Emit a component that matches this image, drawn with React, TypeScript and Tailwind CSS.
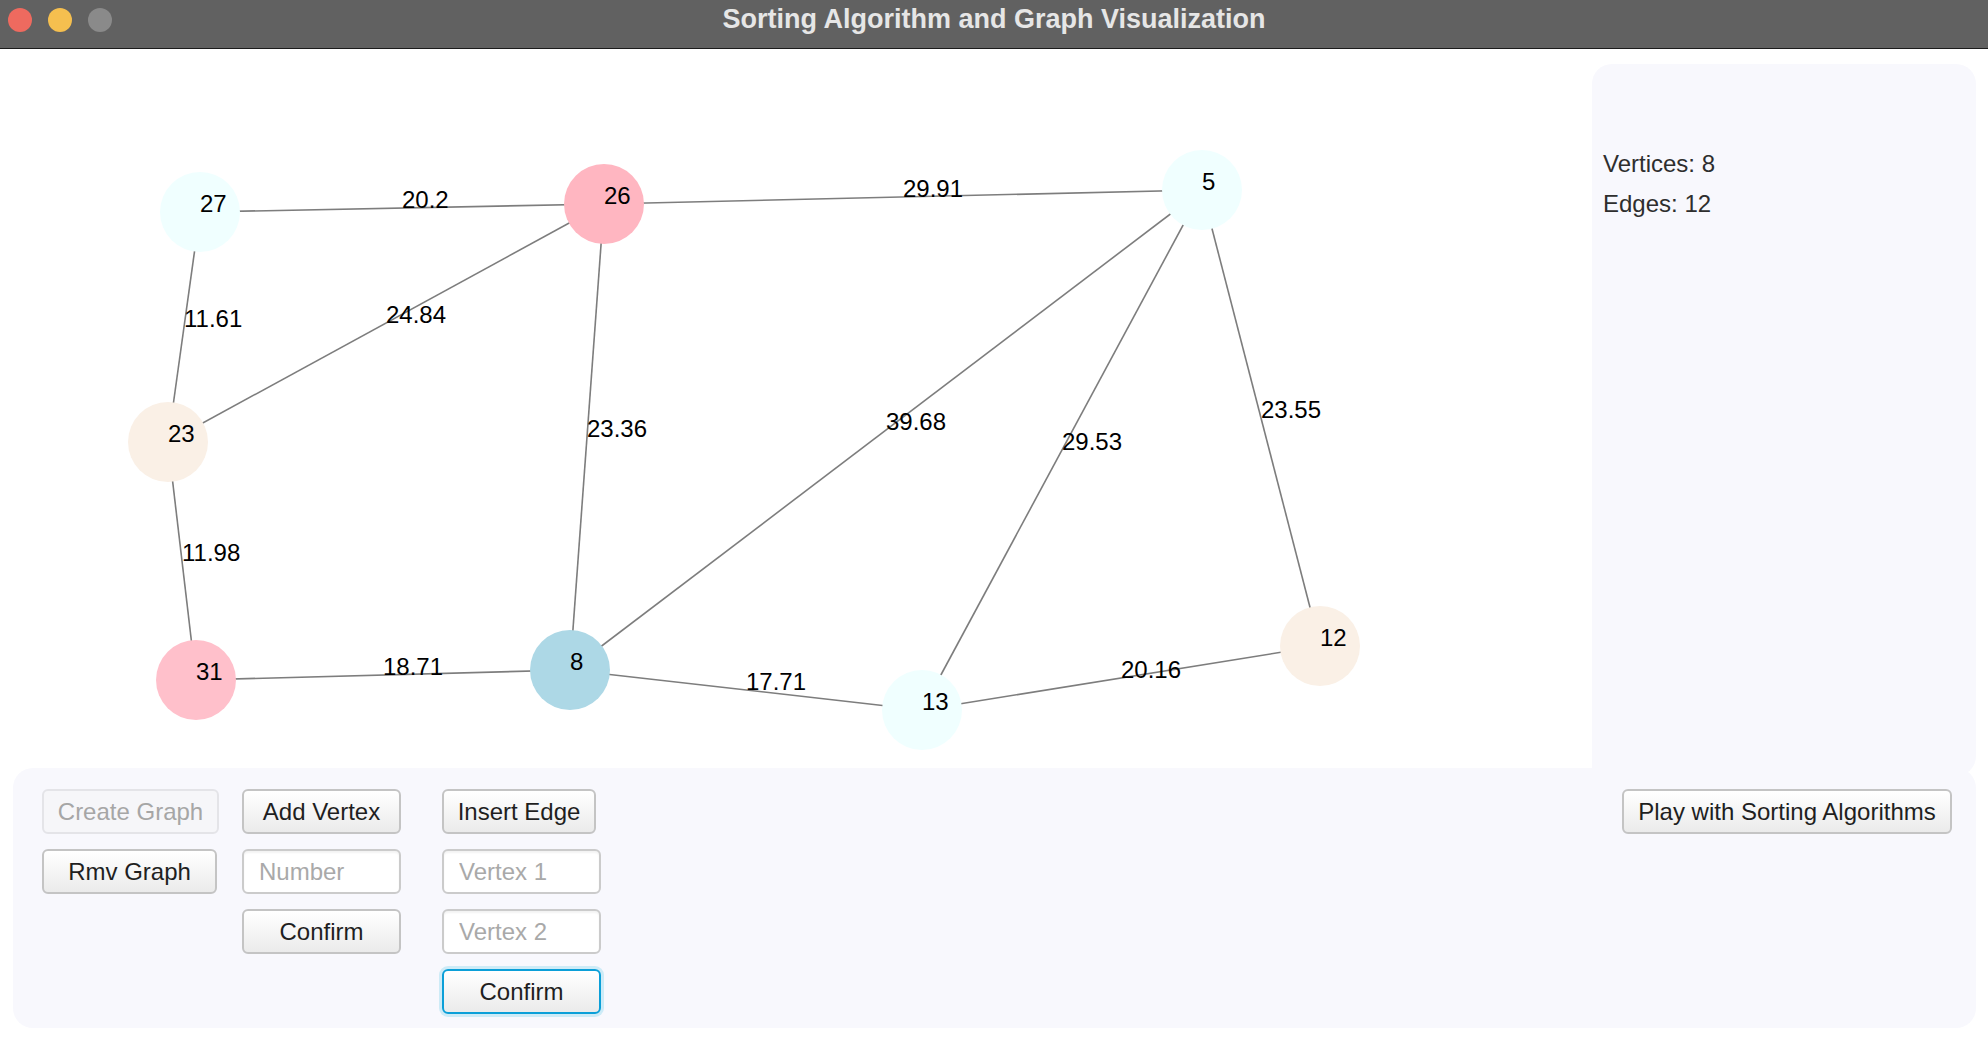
import type { ReactNode } from "react";

type Node = { id: string; x: number; y: number; fill: string };

const nodes: Node[] = [
  { id: "27", x: 200, y: 212, fill: "#f0ffff" },
  { id: "26", x: 604, y: 204, fill: "#ffb6c1" },
  { id: "5", x: 1202, y: 190, fill: "#f0ffff" },
  { id: "23", x: 168, y: 442, fill: "#faf0e6" },
  { id: "31", x: 196, y: 680, fill: "#ffc0cb" },
  { id: "8", x: 570, y: 670, fill: "#add8e6" },
  { id: "13", x: 922, y: 710, fill: "#f0ffff" },
  { id: "12", x: 1320, y: 646, fill: "#faf0e6" },
];

const edges: [string, string, string][] = [
  ["27", "26", "20.2"],
  ["26", "5", "29.91"],
  ["27", "23", "11.61"],
  ["23", "26", "24.84"],
  ["26", "8", "23.36"],
  ["5", "8", "39.68"],
  ["5", "13", "29.53"],
  ["5", "12", "23.55"],
  ["23", "31", "11.98"],
  ["31", "8", "18.71"],
  ["8", "13", "17.71"],
  ["13", "12", "20.16"],
];

const byId = Object.fromEntries(nodes.map(n => [n.id, n]));

function Graph() {
  return (
    <svg width={1592} height={719} viewBox="0 49 1592 719" className="shrink-0">
      {edges.map(([a, b]) => (
        <line
          key={a + b}
          x1={byId[a].x}
          y1={byId[a].y}
          x2={byId[b].x}
          y2={byId[b].y}
          stroke="#7d7d7d"
          strokeWidth={1.6}
        />
      ))}
      {nodes.map(n => (
        <circle key={n.id} cx={n.x} cy={n.y} r={40} fill={n.fill} />
      ))}
      <g fontFamily="'Liberation Sans', Arial, sans-serif" fontSize={24} fill="#000">
        {edges.map(([a, b, w]) => (
          <text key={w + a} x={(byId[a].x + byId[b].x) / 2} y={(byId[a].y + byId[b].y) / 2}>
            {w}
          </text>
        ))}
        {nodes.map(n => (
          <text key={n.id} x={n.x} y={n.y}>
            {n.id}
          </text>
        ))}
      </g>
    </svg>
  );
}

function Btn({ children, className = "", disabled, focused }: { children: ReactNode; className?: string; disabled?: boolean; focused?: boolean }) {
  const base = "h-[45px] rounded-[6px] text-[24px] leading-none flex items-center justify-center";
  if (disabled) {
    return (
      <button type="button" disabled className={`${base} border-2 border-[#e4e4e8] bg-[#f6f6f9] text-[#a6a6a6] ${className}`}>
        {children}
      </button>
    );
  }
  return (
    <button
      type="button"
      className={`${base} bg-linear-to-b from-white to-[#ebebeb] text-[#1f1f1f] ${
        focused ? "border-2 border-[#0b9fd8] ring-[3px] ring-[#cdebf7]" : "border-2 border-[#c4c4c4]"
      } ${className}`}
    >
      {children}
    </button>
  );
}

function Field({ placeholder, className = "" }: { placeholder: string; className?: string }) {
  return (
    <input
      placeholder={placeholder}
      className={`h-[45px] rounded-[6px] border-2 border-[#cbcbcb] bg-white px-[15px] text-[24px] text-[#1f1f1f] placeholder:text-[#a9a9a9] shadow-[inset_0_2px_2px_rgba(0,0,0,0.05)] outline-none ${className}`}
    />
  );
}

export default function App() {
  return (
    <div className="flex h-[1038px] w-[1988px] flex-col overflow-hidden bg-white font-['Liberation_Sans',Arial,sans-serif]">
      <header className="grid h-[49px] shrink-0 grid-cols-[1fr_auto_1fr] items-start border-b border-[#1c1c1c] bg-[#616161]">
        <div className="flex gap-[16px] pl-[8px] pt-[8px]">
          <span className="size-[24px] rounded-full bg-[#ee6a5f]" />
          <span className="size-[24px] rounded-full bg-[#f5bf4f]" />
          <span className="size-[24px] rounded-full bg-[#8a8a8a]" />
        </div>
        <h1 className="pt-[4px] text-[27px] font-bold leading-[31px] text-[#e6e6e6]">
          Sorting Algorithm and Graph Visualization
        </h1>
        <div />
      </header>

      <div className="flex h-[719px] shrink-0 items-start">
        <Graph />
        <aside className="mt-[15px] h-[712px] w-[384px] rounded-t-[20px] rounded-br-[20px] bg-[#f8f8fd] pl-[11px] pt-[80px] text-[24px] leading-[40px] text-[#2e2e2e]">
          <p>Vertices: 8</p>
          <p>Edges: 12</p>
        </aside>
      </div>

      <section className="ml-[13px] flex h-[260px] w-[1963px] shrink-0 items-start rounded-[20px] bg-[#f8f8fd] pl-[29px] pr-[24px] pt-[21px]">
        <div className="flex w-[177px] flex-col gap-[15px]">
          <Btn disabled className="w-[177px]">Create Graph</Btn>
          <Btn className="w-[175px]">Rmv Graph</Btn>
        </div>
        <div className="ml-[23px] flex w-[159px] flex-col gap-[15px]">
          <Btn className="w-[159px]">Add Vertex</Btn>
          <Field placeholder="Number" className="w-[159px]" />
          <Btn className="w-[159px]">Confirm</Btn>
        </div>
        <div className="ml-[41px] flex w-[159px] flex-col gap-[15px]">
          <Btn className="w-[154px]">Insert Edge</Btn>
          <Field placeholder="Vertex 1" className="w-[159px]" />
          <Field placeholder="Vertex 2" className="w-[159px]" />
          <Btn focused className="w-[159px]">Confirm</Btn>
        </div>
        <Btn className="ml-auto w-[330px]">Play with Sorting Algorithms</Btn>
      </section>
    </div>
  );
}
